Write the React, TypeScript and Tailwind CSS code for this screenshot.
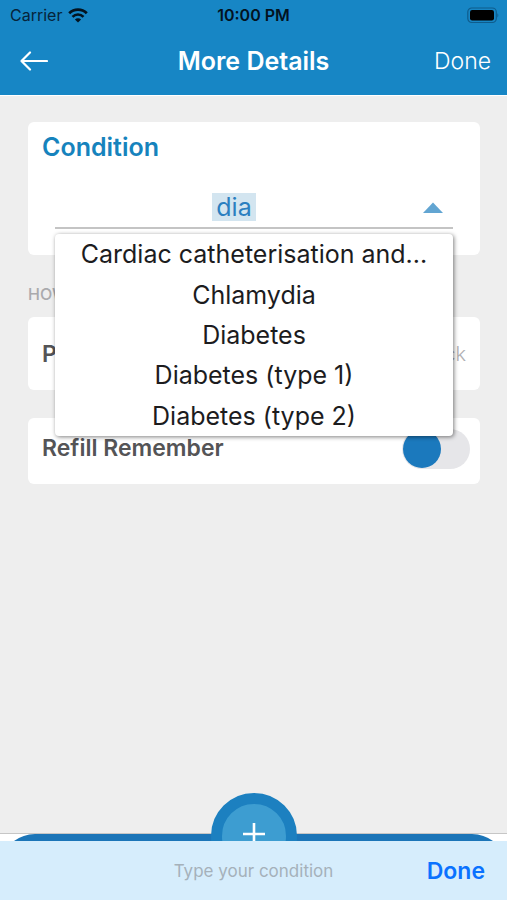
import { useState } from 'react'

const conditions = [
    'Cardiac catheterisation and...',
    'Chlamydia',
    'Diabetes',
    'Diabetes (type 1)',
    'Diabetes (type 2)',
]

function StatusBar() {
    return (
        <div className="grid h-[30px] grid-cols-3 items-center px-2 text-[16px] leading-5 text-[#06243a]">
            <div className="flex items-center gap-1.5 pl-0.5">
                <span>Carrier</span>
                <svg width="20" height="15" viewBox="0 0 20 15" fill="none" stroke="#03131f" aria-hidden="true">
                    <path d="M1.2 5.3a12.6 12.6 0 0 1 17.6 0" strokeWidth="2.8" />
                    <path d="M4.5 8.8a7.8 7.8 0 0 1 11 0" strokeWidth="2.6" />
                    <path d="M10 14.6 6.9 11.5a4.4 4.4 0 0 1 6.2 0Z" fill="#03131f" stroke="none" />
                </svg>
            </div>
            <div className="text-center font-semibold whitespace-nowrap text-[#03131f]">10:00 PM</div>
            <div className="flex justify-end">
                <svg width="33" height="17" viewBox="0 0 33 17" aria-hidden="true">
                    <rect x="1.8" y="1" width="28.5" height="14.5" rx="4" fill="none" stroke="#0f5c8c" strokeWidth="1.2" />
                    <rect x="4" y="3" width="24" height="10.4" rx="2.2" fill="#000" />
                    <path d="M31.4 6.2v4.2c1.2-.7 1.2-3.5 0-4.2Z" fill="#0f5c8c" />
                </svg>
            </div>
        </div>
    )
}

function Header() {
    return (
        <header className="border-b border-white bg-[#1786c5]">
            <StatusBar />
            <div className="grid h-[65px] grid-cols-[1fr_auto_1fr] items-center px-4 pb-1 text-white">
                <button type="button" aria-label="Back" className="justify-self-start p-1">
                    <svg width="28" height="20" viewBox="0 0 28 20" fill="none" stroke="currentColor" strokeWidth="2.2" strokeLinecap="round" strokeLinejoin="round" aria-hidden="true">
                        <path d="M27 10H1.5M10 1.5 1.5 10l8.5 8.5" />
                    </svg>
                </button>
                <h1 className="text-[25px] leading-8 font-semibold">More Details</h1>
                <button type="button" className="justify-self-end text-[23px] leading-8 font-light">Done</button>
            </div>
        </header>
    )
}

function ConditionCard() {
    const [value, setValue] = useState('dia')
    const [open, setOpen] = useState(true)

    return (
        <section className="rounded-md bg-white px-[14px] pt-[9px] pb-[26px]">
            <label htmlFor="condition" className="block text-[25px] leading-8 font-semibold text-[#1683bd]">Condition</label>
            <div className="relative mx-[13px] mt-[30px]">
                <div className="flex h-9 items-start border-b-2 border-[#c4c4c4]">
                    <div className="flex flex-1 justify-center">
                        <input
                            id="condition"
                            value={value}
                            onChange={(e) => setValue(e.target.value)}
                            autoComplete="off"
                            className="h-7 w-[44px] bg-[#d3e5f0] text-center text-[25px] leading-7 text-[#2b7fc0] outline-none"
                        />
                    </div>
                    <button type="button" aria-label="Toggle suggestions" onClick={() => setOpen(!open)} className="flex h-7 w-10 items-center justify-center">
                        <svg width="20" height="11" viewBox="0 0 20 11" fill="#62a5d2" aria-hidden="true">
                            <path d="M10 .5 20 11H0Z" />
                        </svg>
                    </button>
                </div>
                {open && (
                    <ul className="absolute inset-x-0 top-full z-10 mt-[5px] grid h-[202px] grid-rows-5 rounded bg-white shadow-[1px_1px_4px_rgba(0,0,0,0.5)]">
                        {conditions.map((name) => (
                            <li key={name} className="flex min-w-0">
                                <button type="button" onClick={() => setValue(name)} className="w-full truncate px-4 text-center text-[25px] leading-8 text-[#1c1c1e]">
                                    {name}
                                </button>
                            </li>
                        ))}
                    </ul>
                )}
            </div>
        </section>
    )
}

function RefillSwitch() {
    return (
        <label htmlFor="refill" className="flex h-[66px] items-center justify-between rounded-md bg-white pr-[10px] pb-1 pl-[14px]">
            <span className="pb-0.5 text-[23px] leading-8 font-semibold text-[#545456]">Refill Remember</span>
            <input
                id="refill"
                type="checkbox"
                role="switch"
                className="h-[40px] w-[68px] appearance-none rounded-full bg-[#e6e6e9] p-px before:block before:size-[38px] before:rounded-full before:bg-[#1b79bd] checked:before:ml-auto"
            />
        </label>
    )
}

function BottomNav() {
    return (
        <nav className="relative h-2 border-t border-[#c6c6c6] bg-white">
            <svg viewBox="0 0 507 8" preserveAspectRatio="none" className="block h-full w-full" aria-hidden="true">
                <path d="M14 8Q23 .5 35 0H472Q484 .5 493 8Z" fill="#1b75b8" />
            </svg>
            <div className="absolute bottom-0 left-1/2 h-12 w-[86px] -translate-x-1/2 overflow-hidden">
                <button type="button" aria-label="Add" className="flex size-[86px] items-center justify-center rounded-full border-[11px] border-[#1c80c0] bg-[#3d9dd1] pb-1">
                    <svg width="22" height="22" viewBox="0 0 22 22" stroke="#fff" strokeWidth="2.6" aria-hidden="true">
                        <path d="M11 0v22M0 11h22" />
                    </svg>
                </button>
            </div>
        </nav>
    )
}

export default function App() {
    return (
        <div className="flex min-h-screen flex-col bg-[#eeeeee] font-['Inter','Liberation_Sans',sans-serif]">
            <Header />
            <main className="flex-1 pt-[26px] pr-[27px] pl-7">
                <ConditionCard />
                <h2 className="pt-[26px] pb-2.5 text-[16px] leading-[26px] font-medium text-[#aaaaad]">HOW OFTEN</h2>
                <button type="button" className="flex h-[73px] w-full items-center justify-between rounded-md bg-white px-[14px]">
                    <span className="text-[23px] leading-8 font-semibold text-[#545456]">Period</span>
                    <span className="text-[20px] leading-8 font-light text-[#b0b0b3]">Pick</span>
                </button>
                <div className="mt-7">
                    <RefillSwitch />
                </div>
            </main>
            <BottomNav />
            <div className="grid h-[59px] grid-cols-[1fr_auto_1fr] items-center bg-[#d6edfc] px-[22px]">
                <span className="col-start-2 text-[17px] leading-6 text-[#a5b1ba]">Type your condition</span>
                <button type="button" className="justify-self-end text-[23px] leading-8 font-semibold text-[#0a72ff]">Done</button>
            </div>
        </div>
    )
}
